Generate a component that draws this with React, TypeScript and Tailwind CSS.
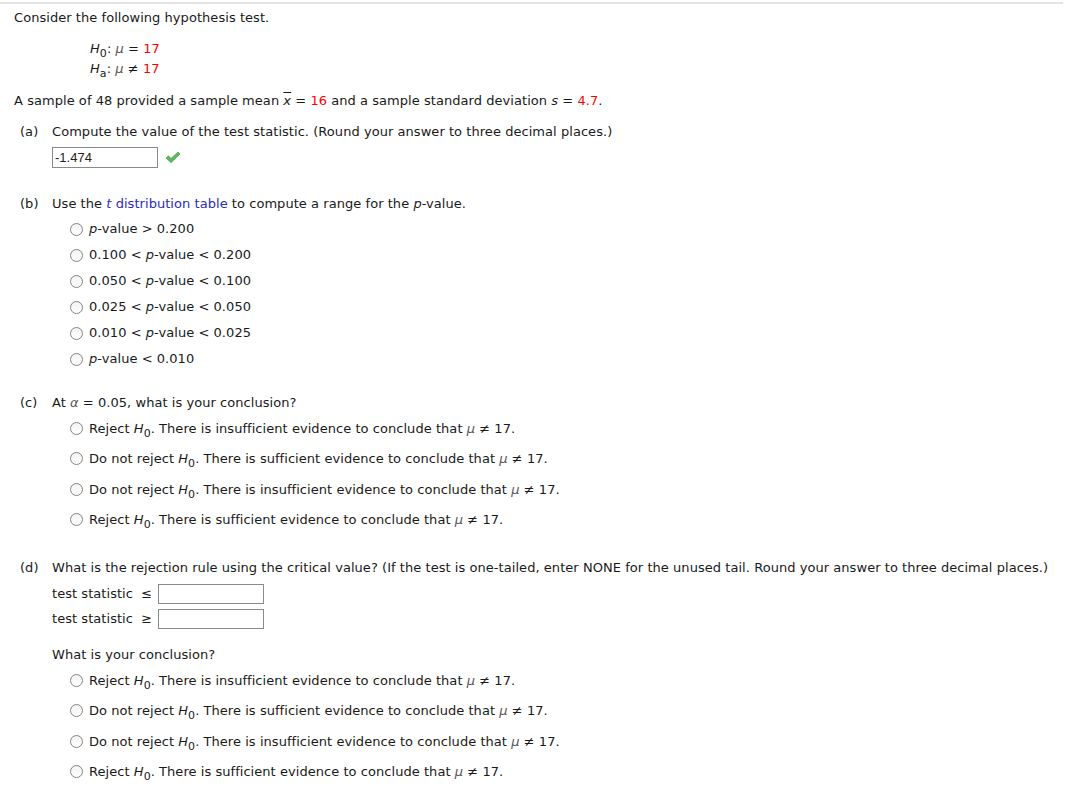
import React from "react";

const Red = ({ children }: { children: React.ReactNode }) => (
  <span className="text-[#f00]">{children}</span>
);

const H0 = () => (
  <span>
    <i>H</i>
    <sub className="text-[11px] relative top-[4px]">0</sub>
  </span>
);

const Mu = () => <i className="text-[#555]">μ</i>;

function Radio() {
  return (
    <span className="inline-block w-[13px] h-[13px] rounded-full border border-[#838383] bg-gradient-to-b from-[#f2f2f2] to-white shrink-0" />
  );
}

function Option({ children, h }: { children: React.ReactNode; h: string }) {
  return (
    <div className={`flex items-center pl-[56px] gap-[6px] ${h}`}>
      <Radio />
      <span>{children}</span>
    </div>
  );
}

function Conclusions() {
  const rows: [string, string][] = [
    ["Reject", "insufficient"],
    ["Do not reject", "sufficient"],
    ["Do not reject", "insufficient"],
    ["Reject", "sufficient"],
  ];
  return (
    <div>
      {rows.map(([a, b], i) => (
        <Option key={i} h="h-[30.5px]">
          {a} <H0 />. There is {b} evidence to conclude that <Mu /> ≠ 17.
        </Option>
      ))}
    </div>
  );
}

const P = () => <i>p</i>;

export default function App() {
  const pOpts: React.ReactNode[] = [
    <>
      <P />-value &gt; 0.200
    </>,
    <>
      0.100 &lt; <P />-value &lt; 0.200
    </>,
    <>
      0.050 &lt; <P />-value &lt; 0.100
    </>,
    <>
      0.025 &lt; <P />-value &lt; 0.050
    </>,
    <>
      0.010 &lt; <P />-value &lt; 0.025
    </>,
    <>
      <P />-value &lt; 0.010
    </>,
  ];

  return (
    <div className="w-[1065px] h-[791px] bg-white text-[13px] tracking-[0.05px] text-[#1a1a1a] font-['DejaVu_Sans',Verdana,sans-serif] overflow-hidden">
      <div className="mt-[2px] mr-[2px] h-[2px] bg-[#e4e4e4]" />
      <div className="pl-[14px] pt-[4px]">
        <div className="h-[20px] leading-[20px]">Consider the following hypothesis test.</div>

        <div className="mt-[11px] pl-[76px]">
          <div className="h-[20px] leading-[20px]">
            <H0 />: <Mu /> = <Red>17</Red>
          </div>
          <div className="h-[20px] leading-[20px]">
            <i>H</i>
            <sub className="text-[11px] relative top-[4px]">a</sub>: <Mu /> ≠ <Red>17</Red>
          </div>
        </div>

        <div className="mt-[12px] h-[20px] leading-[20px]">
          A sample of 48 provided a sample mean <i className="overline">x</i> = <Red>16</Red> and a
          sample standard deviation <i>s</i> = <Red>4.7</Red>.
        </div>

        {/* (a) */}
        <div className="mt-[11px] flex h-[20px] leading-[20px]">
          <span className="w-[38px] pl-[6px]">(a)</span>
          <span>Compute the value of the test statistic. (Round your answer to three decimal places.)</span>
        </div>
        <div className="mt-[5px] pl-[38px] flex items-center gap-[7px]">
          <div className="w-[106px] h-[21px] border border-[#8a8a8a] px-[2px] leading-[19px] tracking-normal font-['Liberation_Sans',Arial,sans-serif] text-[13px] text-[#222]">
            -1.474
          </div>
          <svg width="16" height="13" viewBox="0 0 16 13">
            <path
              d="M1 7 L3.5 4.8 L6 7.5 L13 1 L15 3 L6 11.8 Z"
              fill="#5cb85c"
              stroke="#3f9a3f"
              strokeWidth="0.6"
              strokeLinejoin="round"
            />
          </svg>
        </div>

        {/* (b) */}
        <div className="mt-[26px] flex h-[20px] leading-[20px]">
          <span className="w-[38px] pl-[6px]">(b)</span>
          <span>
            Use the <span className="text-[#2b2bbf]"><i>t</i> distribution table</span> to compute a
            range for the <P />-value.
          </span>
        </div>
        <div className="mt-[2px]">
          {pOpts.map((o, i) => (
            <Option key={i} h="h-[26px]">
              {o}
            </Option>
          ))}
        </div>

        {/* (c) */}
        <div className="mt-[21px] flex h-[20px] leading-[20px]">
          <span className="w-[38px] pl-[6px]">(c)</span>
          <span>
            At <i className="text-[#555]">α</i> = 0.05, what is your conclusion?
          </span>
        </div>
        <Conclusions />

        {/* (d) */}
        <div className="mt-[23px] flex h-[20px] leading-[20px]">
          <span className="w-[38px] pl-[6px]">(d)</span>
          <span>
            What is the rejection rule using the critical value? (If the test is one-tailed, enter
            NONE for the unused tail. Round your answer to three decimal places.)
          </span>
        </div>
        <div className="mt-[3px] pl-[38px]">
          {["≤", "≥"].map((s) => (
            <div key={s} className="h-[25px] flex items-center">
              <span className="w-[106px]">
                test statistic <span className="ml-[4px]">{s}</span>
              </span>
              <div className="w-[106px] h-[20px] border border-[#8a8a8a]" />
            </div>
          ))}
          <div className="mt-[14px] h-[20px] leading-[20px]">What is your conclusion?</div>
        </div>
        <Conclusions />
      </div>
    </div>
  );
}
